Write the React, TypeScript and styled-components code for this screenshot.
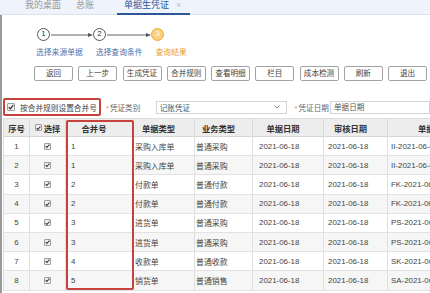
import React from "react";
import styled, { createGlobalStyle } from "styled-components";

/* ---- data ---- */
const TABS = [
    { key: "desk", label: "我的桌面" },
    { key: "ledger", label: "总账" },
];

const STEPS = ["选择来源单据", "选择查询条件", "查询结果"];

const BUTTONS = ["返回", "上一步", "生成凭证", "合并规则", "查看明细", "栏目", "成本检测", "刷新", "退出"];

const COLUMNS = [
    { key: "no", label: "序号", width: 26 },
    { key: "sel", label: "选择", width: 36 },
    { key: "merge", label: "合并号", width: 67 },
    { key: "type", label: "单据类型", width: 62 },
    { key: "biz", label: "业务类型", width: 58 },
    { key: "date", label: "单据日期", width: 71 },
    { key: "audit", label: "审核日期", width: 64 },
    { key: "code", label: "单据编号", width: 104 },
];

const ROWS = [
    { merge: "1", type: "采购入库单", biz: "普通采购", code: "II-2021-06-0001" },
    { merge: "1", type: "采购入库单", biz: "普通采购", code: "II-2021-06-0002" },
    { merge: "2", type: "付款单", biz: "普通付款", code: "FK-2021-06-0001" },
    { merge: "2", type: "付款单", biz: "普通付款", code: "FK-2021-06-0002" },
    { merge: "3", type: "进货单", biz: "普通采购", code: "PS-2021-06-0001" },
    { merge: "3", type: "进货单", biz: "普通采购", code: "PS-2021-06-0002" },
    { merge: "4", type: "收款单", biz: "普通收款", code: "SK-2021-06-0001" },
    { merge: "5", type: "销货单", biz: "普通销售", code: "SA-2021-06-0001" },
];

const GRID = COLUMNS.map(c => `${c.width}px`).join(" ");

/* ---- small drawings ---- */
function Tick ()
{
    return (
        <svg width="6" height="6" viewBox="0 0 6 6">
            <path d="M0.8 3.2 L2.4 4.8 L5.3 1.2" fill="none" stroke="#333" strokeWidth="1.3"/>
        </svg>
    );
}

function Arrow ({ width }: { width: number })
{
    return (
        <svg width={width} height="6" viewBox={`0 0 ${width} 6`}>
            <line x1="1" y1="3" x2={width - 3} y2="3" stroke="#666" strokeWidth="1"/>
            <path d={`M${width - 5} 1 L${width} 3 L${width - 5} 5 Z`} fill="#555"/>
        </svg>
    );
}

function Chevron ()
{
    return (
        <svg width="6" height="4" viewBox="0 0 6 4">
            <path d="M0.5 0.5 L3 3 L5.5 0.5" fill="none" stroke="#888" strokeWidth="1"/>
        </svg>
    );
}

/* ---- root ---- */
export default function App ()
{
    return (
        <Page>
            <Global/>
            <TabBar>
                {TABS.map(t => <Tab key={t.key}>{t.label}</Tab>)}
                <ActiveTab>单据生凭证<TabClose>×</TabClose></ActiveTab>
            </TabBar>

            <Content>
                <Steps>
                    <CircleRow>
                        <Circle>1</Circle>
                        <Arrow width={43}/>
                        <Circle>2</Circle>
                        <Arrow width={45}/>
                        <Circle $current>3</Circle>
                    </CircleRow>
                    <LabelRow>
                        {STEPS.map((s, i) => <StepLabel key={s} $current={i === 2}>{s}</StepLabel>)}
                    </LabelRow>
                </Steps>

                <Toolbar>
                    {BUTTONS.map(b => <Button key={b}>{b}</Button>)}
                </Toolbar>

                <FilterRow>
                    <MergeOption>
                        <Box $big><Tick/></Box>
                        <span>按合并规则设置合并号</span>
                    </MergeOption>
                    <FieldLabel><Star>*</Star>凭证类别</FieldLabel>
                    <Select>
                        <span>记账凭证</span>
                        <Chevron/>
                    </Select>
                    <FieldLabel $tight><Star>*</Star>凭证日期</FieldLabel>
                    <Input>单据日期</Input>
                </FilterRow>

                <Table>
                    <HeadRow>
                        {COLUMNS.map(c => (
                            <HeadCell key={c.key} $plain={c.key === "no" || c.key === "sel"}>
                                {c.key === "sel" && <Box><Tick/></Box>}
                                {c.label}
                            </HeadCell>
                        ))}
                    </HeadRow>
                    {ROWS.map((r, i) => (
                        <BodyRow key={i} $odd={i % 2 === 1}>
                            <Cell $align="center">{i + 1}</Cell>
                            <Cell $align="center"><Box><Tick/></Box></Cell>
                            <Cell $pad={5}>{r.merge}</Cell>
                            <Cell $pad={2}>{r.type}</Cell>
                            <Cell $pad={1}>{r.biz}</Cell>
                            <Cell $pad={6}>2021-06-18</Cell>
                            <Cell $pad={4}>2021-06-18</Cell>
                            <Cell $pad={3}>{r.code}</Cell>
                        </BodyRow>
                    ))}
                    <Highlight/>
                </Table>
            </Content>
        </Page>
    );
}

/* ---- styled ---- */
const Global = createGlobalStyle`
    html, body { margin: 0; padding: 0; background: #fff; }
    body {
        font-family: "Liberation Sans", "Noto Sans CJK SC", sans-serif;
        color: #444;
    }
`;

const Page = styled.div`
    width: 430px;
    height: 293px;
    overflow: hidden;
    background: #fff;
`;

/* tabs */
const TabBar = styled.div`
    display: flex;
    gap: 15px;
    height: 15px;
    padding-left: 25px;
    background: #eef3fc;
    border-bottom: 1px solid #dde2ea;
    box-sizing: border-box;
`;
const Tab = styled.div`
    font-size: 9px;
    line-height: 11px;
    color: #9a9a9a;
`;
const ActiveTab = styled.div`
    display: flex;
    gap: 7px;
    margin-left: 8px;
    padding: 0 9px 0 7px;
    height: 15px;
    box-sizing: border-box;
    border-bottom: 2px solid #2d5896;
    font-size: 9px;
    line-height: 11px;
    color: #2d5896;
`;
const TabClose = styled.span`
    color: #b9bec8;
    font-size: 9px;
`;

/* body */
const Content = styled.div`
    border-left: 2px solid #9a9a9a;
    height: 278px;
`;

const Steps = styled.div`
    padding-top: 13px;
`;
const CircleRow = styled.div`
    display: flex;
    align-items: center;
    padding-left: 35px;
`;
const Circle = styled.div<{ $current?: boolean }>`
    width: 13px;
    height: 13px;
    box-sizing: border-box;
    border-radius: 50%;
    border: 1.5px solid ${p => p.$current ? "#efab3c" : "#555"};
    background: ${p => p.$current ? "#f9d07a" : "#fff"};
    color: ${p => p.$current ? "#fff" : "#333"};
    font-size: 8px;
    line-height: 10px;
    text-align: center;
`;
const LabelRow = styled.div`
    display: flex;
    gap: 13px;
    padding-left: 34px;
    margin-top: 7px;
`;
const StepLabel = styled.div<{ $current?: boolean }>`
    font-size: 7.8px;
    line-height: 10px;
    color: ${p => p.$current ? "#e9a03a" : "#4b74b0"};
`;

const Toolbar = styled.div`
    display: flex;
    gap: 5.25px;
    padding-left: 32px;
    margin-top: 8px;
`;
const Button = styled.div`
    flex: none;
    width: 39px;
    height: 15px;
    box-sizing: border-box;
    border: 1px solid #a3a3a3;
    border-radius: 2px;
    background: #fff;
    font-size: 7.6px;
    line-height: 13px;
    text-align: center;
    color: #444;
`;

/* filter */
const FilterRow = styled.div`
    display: flex;
    align-items: center;
    height: 18px;
    margin-top: 17px;
    padding-left: 1px;
`;
const MergeOption = styled.label`
    display: flex;
    align-items: center;
    gap: 5px;
    width: 102px;
    height: 18px;
    box-sizing: border-box;
    padding-left: 2px;
    border: 2px solid #c8423d;
    border-radius: 2px;
    font-size: 7.7px;
    color: #444;
`;
const FieldLabel = styled.div<{ $tight?: boolean }>`
    margin-left: ${p => p.$tight ? 8 : 5}px;
    width: ${p => p.$tight ? 37 : 52}px;
    font-size: 7.6px;
    color: #666;
`;
const Star = styled.span`
    color: #ee8a8a;
    margin-right: 1px;
`;
const Select = styled.div`
    display: flex;
    align-items: center;
    justify-content: space-between;
    width: 136px;
    height: 13px;
    box-sizing: border-box;
    padding: 0 6px 0 3px;
    border: 1px solid #d4d4d4;
    font-size: 7.6px;
    color: #555;
`;
const Input = styled.div`
    flex: none;
    width: 100px;
    height: 13px;
    box-sizing: border-box;
    padding-left: 3px;
    border: 1px solid #d4d4d4;
    font-size: 7.6px;
    line-height: 11px;
    color: #555;
`;

/* table */
const Table = styled.div`
    position: relative;
    margin-top: 2px;
    margin-left: 1px;
    width: 500px;
    border-left: 1px solid #ddd;
`;
const HeadRow = styled.div`
    display: grid;
    grid-template-columns: ${GRID};
    height: 19px;
    background: #ededed;
    border-top: 1px solid #ddd;
    border-bottom: 1px solid #d6d6d6;
    box-sizing: border-box;
`;
const HeadCell = styled.div<{ $plain?: boolean }>`
    display: flex;
    align-items: center;
    justify-content: center;
    gap: 2px;
    padding-right: ${p => p.$plain ? 0 : 10}px;
    border-right: 1px solid #dadada;
    font-size: 8.3px;
    font-weight: bold;
    color: #333;
`;
const BodyRow = styled.div<{ $odd: boolean }>`
    display: grid;
    grid-template-columns: ${GRID};
    height: 19.2px;
    box-sizing: border-box;
    border-bottom: 1px solid #e2e2e2;
    background: ${p => p.$odd ? "#f6f6f6" : "#fff"};
`;
const Cell = styled.div<{ $align?: "center"; $pad?: number }>`
    display: flex;
    align-items: center;
    justify-content: ${p => p.$align === "center" ? "center" : "flex-start"};
    padding-left: ${p => p.$pad || 0}px;
    border-right: 1px solid #e0e0e0;
    font-size: 7.9px;
    color: #444;
    white-space: nowrap;
    overflow: hidden;
`;
const Box = styled.span<{ $big?: boolean }>`
    display: inline-flex;
    align-items: center;
    justify-content: center;
    flex: none;
    width: ${p => p.$big ? 8 : 7}px;
    height: ${p => p.$big ? 8 : 7}px;
    box-sizing: border-box;
    border: 1px solid #9d9d9d;
    border-radius: 1px;
    background: #f1f1f1;
`;
const Highlight = styled.div`
    position: absolute;
    left: 62px;
    top: 2px;
    width: 68px;
    height: 170px;
    box-sizing: border-box;
    border: 2px solid #c8423d;
    border-radius: 2px;
    pointer-events: none;
`;
